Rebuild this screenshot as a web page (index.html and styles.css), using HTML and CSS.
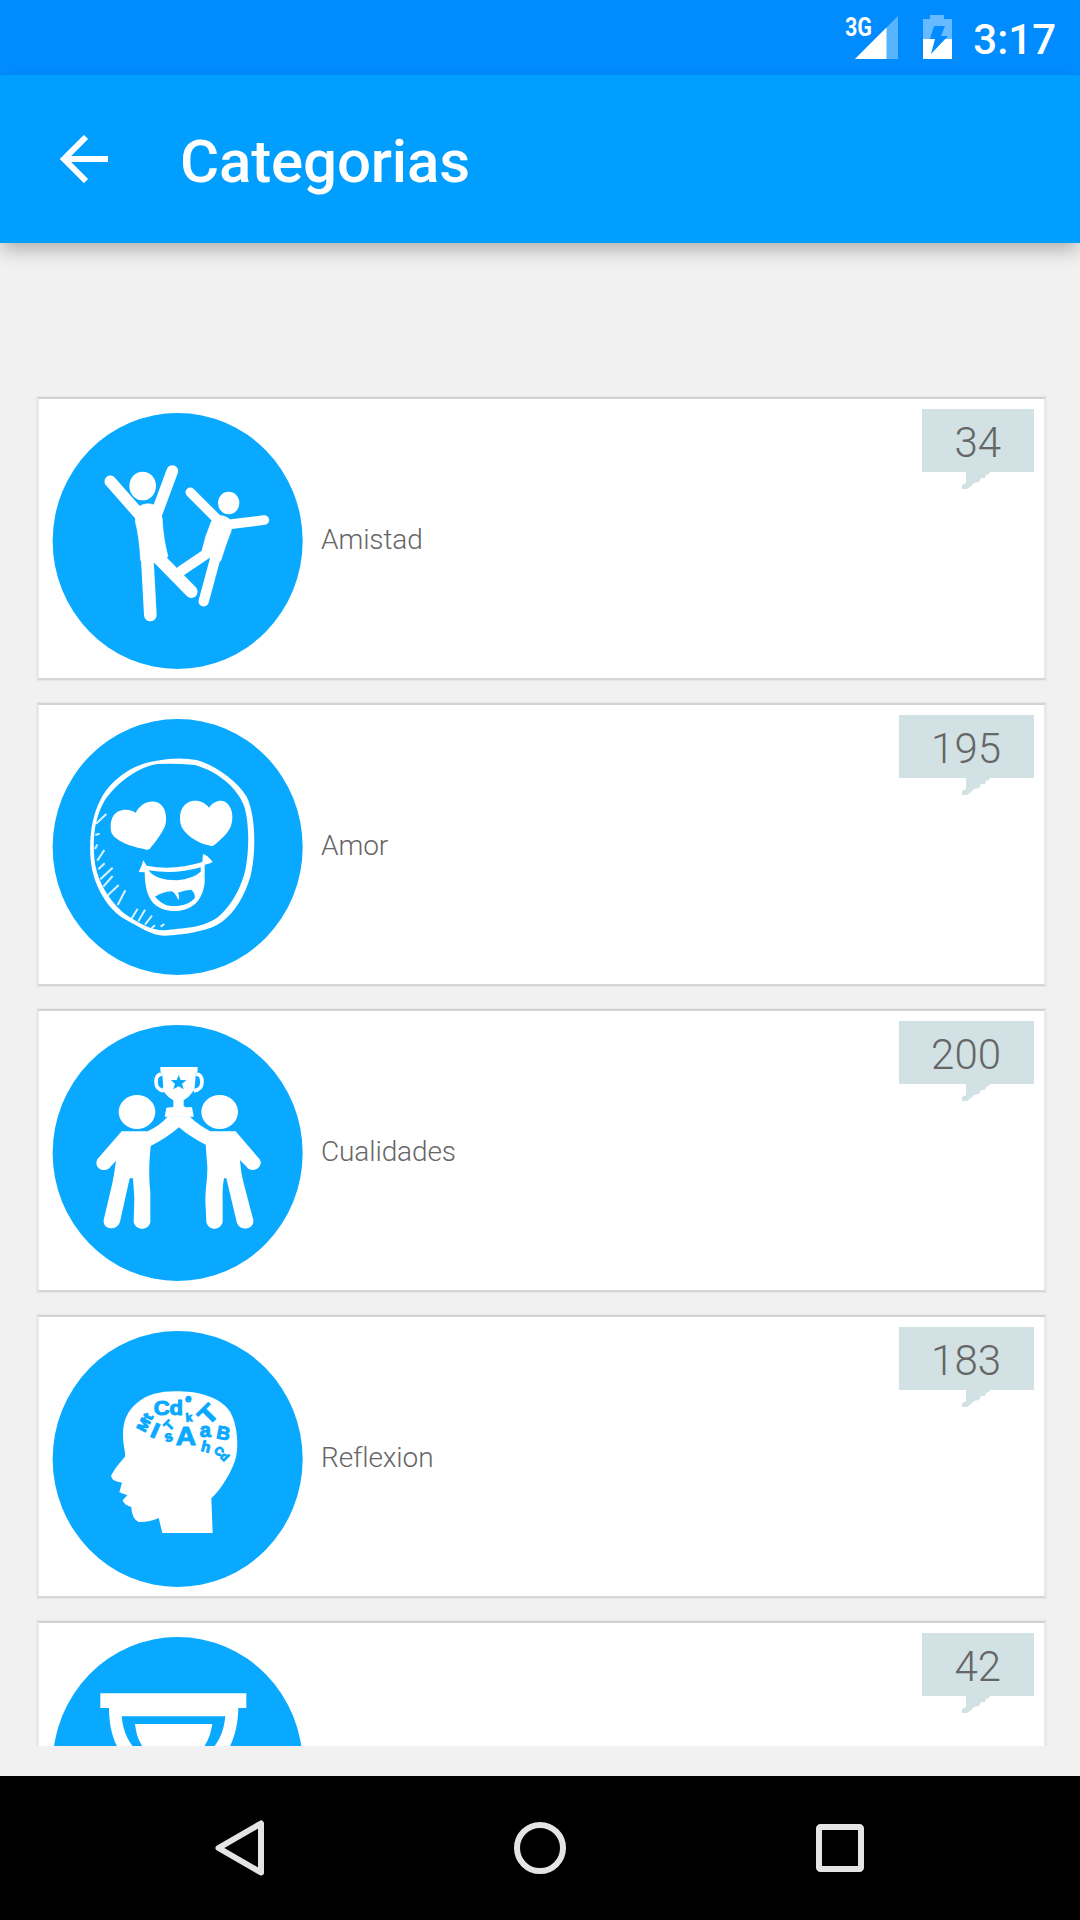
FILE: index.html
```html
<!DOCTYPE html>
<html lang="es">
<head>
    <meta charset="UTF-8">
    <meta name="viewport" content="width=device-width, initial-scale=1.0">
    <title>Categorias</title>
    <link rel="stylesheet" href="styles.css">
</head>
<body>
    <div class="status-bar">
        <svg class="signal" width="54" height="48" viewBox="0 0 54 48">
            <path d="M52 3V46H9z" fill="#fff" fill-opacity=".35"/>
            <path d="M40.500 14.500V46H9z" fill="#fff"/>
            <rect x="0" y="0" width="25" height="24" fill="#008cff"/>
            <text x="-1" y="22.500" textLength="27" lengthAdjust="spacingAndGlyphs">3G</text>
        </svg>
        <svg class="battery" width="29" height="44" viewBox="0 0 29 44">
            <path d="M7 0h14v4h8v20H0V4h7z" fill="#fff" fill-opacity=".4"/>
            <path d="M0 24h29v20H0z" fill="#fff"/>
            <path d="M11 11h11l-4 10h7L8 39l4-15H7z" fill="#008cff"/>
        </svg>
        <span class="clock">3:17</span>
    </div>

    <header class="app-bar">
        <svg class="back" width="48" height="48" viewBox="0 0 48 48">
            <path d="M48 24H6M26 2L4 24l22 22" fill="none" stroke="#fff" stroke-width="6"/>
        </svg>
        <h1>Categorias</h1>
    </header>

    <main class="list">
        <div class="card">
            <svg class="icon" viewBox="66 66 756 774">
                <ellipse class="disc" cx="443" cy="453" rx="375" ry="384"/>
                <g fill="#fff" stroke="#fff" stroke-linecap="round" stroke-linejoin="round">
                    <ellipse cx="338" cy="288" rx="40" ry="43" stroke="none"/>
                    <ellipse cx="596" cy="339" rx="32" ry="34" stroke="none"/>
                    <path d="M241 274L336 382M427 243L380 370" fill="none" stroke-width="35"/>
                    <path d="M351 490L361 675M381 500L484 605" fill="none" stroke-width="38"/>
                    <path d="M326 350Q351 334 377 347L396 382Q400 450 414 500L372 517L332 512Q328 440 316 394L318 370z" stroke-width="2"/>
                    <path d="M481 307L564 390M592 404L703 390" fill="none" stroke-width="29"/>
                    <path d="M532 490L453 543M560 490L521 634" fill="none" stroke-width="31"/>
                    <path d="M554 378Q580 373 598 387L604 421Q585 470 572 513L544 502L516 482Q525 440 542 400z" stroke-width="2"/>
                </g>
            </svg>
            <span class="name">Amistad</span>
            <span class="count">34</span>
        </div>

        <div class="card">
            <svg class="icon" viewBox="66 54 756 774">
                <ellipse class="disc" cx="443" cy="441" rx="375" ry="384"/>
                <path fill="#fff" fill-rule="evenodd" d="M380 182Q445 170 500 180C560 198 620 242 650 290C680 350 677 470 661 530C643 590 613 637 580 662C537 697 448 704 408 707C370 710 333 684 280 655C226 620 188 548 182 480C176 410 187 344 213 296C245 236 310 192 380 182zM382 192C315 203 250 260 222 305C194 354 188 414 193 475C199 535 227 590 278 637C326 671 367 692 403 691C455 684 525 686 571 645C612 607 637 550 646 510C658 450 658 370 643 320C620 257 557 213 495 195Q440 190 382 192z"/>
                <g fill="#fff">
                    <path d="M317 338C333 309 361 298 385 308C407 320 411 349 407 371C402 394 373 429 359 447Q353 451 341 447C292 438 251 418 244 397C239 374 243 345 265 334C282 326 302 328 317 338z"/>
                    <path d="M537 323C556 297 583 297 596 315C610 333 609 360 603 377C594 401 569 421 553 435Q547 440 536 436C500 430 463 401 454 379C445 350 451 321 473 308C493 297 522 302 537 323z"/>
                    <path d="M340 481L350 497Q430 513 517 486L519 462Q531 464 548 486Q537 493 524 494L524 548C517 604 486 633 430 633C376 631 345 602 344 517L326 516Q335 500 340 481z"/>
                </g>
                <g class="cut">
                    <path d="M356 511Q435 525 512 502L512 515Q490 536 441 541Q376 541 356 511z"/>
                    <path d="M375 590Q396 576 425 574Q435 578 445 600Q450 591 444 578Q463 570 484 569Q495 578 495 593C480 611 455 619 430 618C407 618 390 607 375 590z"/>
                </g>
                <path d="M198 371L229 342M196 405L209 401M195 447L202 433M202 482L223 450M205 508L224 490M211 538L248 503M220 560L248 528M232 587L266 555M263 615L286 571M304 657L323 626M325 664L345 629M345 674L366 647M365 684L375 676M392 680L403 672" fill="none" stroke="#fff" stroke-width="6" stroke-opacity=".85"/>
            </svg>
            <span class="name">Amor</span>
            <span class="count">195</span>
        </div>

        <div class="card">
            <svg class="icon" viewBox="66 57 756 774">
                <ellipse class="disc" cx="443" cy="444" rx="375" ry="384"/>
                <g fill="#fff">
                    <path d="M391 186H503V199L497 205V236Q492 267 461 286V302L466 307H486L491 335H404L409 308L430 306V286Q397 268 397 236V205L391 199z"/>
                    <path d="M397 207Q378 207 378 231Q378 255 403 257M497 207Q516 207 516 231Q516 255 491 257" fill="none" stroke="#fff" stroke-width="11"/>
                    <ellipse cx="321" cy="321" rx="55" ry="51"/>
                    <ellipse cx="569" cy="321" rx="55" ry="51"/>
                    <path d="M275 379H353Q391 361 414 334H478Q506 361 541 379H617L689 463C701 481 678 504 655 491L630 465Q632 503 641 535L670 645C673 674 631 680 621 655L589 520H582Q576 550 578 585V650C572 678 534 678 529 650L526 585C526 550 533 520 532 485L527 419Q480 396 447 367Q410 399 362 423C356 485 357 525 361 560V650C357 678 316 678 311 650L313 580L309 520H299L270 650C262 678 218 676 221 645L247 535Q254 500 258 467L236 491C211 504 192 482 202 463z"/>
                </g>
                <path class="cut" d="M446 210L452 225L470 226L456 236L461 253L446 244L430 253L435 236L422 226L440 225zM397 216Q386 218 386 231Q386 244 400 247zM497 216Q508 218 508 231Q508 244 494 247z"/>
            </svg>
            <span class="name">Cualidades</span>
            <span class="count">200</span>
        </div>

        <div class="card">
            <svg class="icon" viewBox="66 75 756 774">
                <ellipse class="disc" cx="443" cy="462" rx="375" ry="384"/>
                <path fill="#fff" d="M285 442C271 375 281 326 320 295C353 264 402 257 449 259C510 260 574 278 602 323C622 360 628 425 615 467C602 504 577 547 544 580L548 684H397L386 639Q359 652 326 651Q305 641 304 606Q281 600 278 586L292 571L268 562L276 533Q247 530 243 513Q251 493 285 455z"/>
                <g class="letters">
                    <text x="371" y="329" font-size="58" textLength="88" lengthAdjust="spacingAndGlyphs">Cd</text>
                    <text transform="translate(464 289) rotate(12)" font-size="32">e</text>
                    <text transform="translate(468 350) rotate(-5)" font-size="35">k</text>
                    <text transform="translate(552 346) rotate(-45)" x="-26" font-size="74" textLength="52" lengthAdjust="spacingAndGlyphs">T</text>
                    <text transform="translate(344 384) rotate(-62)" font-size="43" textLength="56" lengthAdjust="spacingAndGlyphs">Mt</text>
                    <text transform="translate(357 393) rotate(24)" font-size="65" textLength="21" lengthAdjust="spacingAndGlyphs">I</text>
                    <text transform="translate(427 370) rotate(-45)" x="-13" font-size="40">T</text>
                    <text transform="translate(407 412) rotate(-15)" font-size="44">s</text>
                    <text x="437" y="420" font-size="80" textLength="61" lengthAdjust="spacingAndGlyphs">A</text>
                    <text x="509" y="395" font-size="60">a</text>
                    <text transform="translate(557 400) rotate(10)" font-size="56">B</text>
                    <text transform="translate(511 437) rotate(14)" font-size="45">h</text>
                    <text transform="translate(550 438) rotate(45)" font-size="35">Cd</text>
                </g>
            </svg>
            <span class="name">Reflexion</span>
            <span class="count">183</span>
        </div>

        <div class="card">
            <svg class="icon" viewBox="66 108 756 774">
                <ellipse class="disc" cx="443" cy="495" rx="375" ry="384"/>
                <path fill="#fff" d="M211 280H649V324H625C624 380 610 430 582 470L460 560V650H550V700H310V650H400V560L280 470C250 430 237 380 237 324H211z"/>
                <path class="cut" d="M275 349H586C579 415 554 470 430 520C305 470 281 410 275 349z"/>
                <path fill="#fff" d="M315 372H547C538 425 520 470 430 500C340 470 321 425 315 372z"/>
            </svg>
            <span class="name"></span>
            <span class="count">42</span>
        </div>
    </main>

    <nav class="nav-bar">
        <svg width="60" height="60" viewBox="0 0 60 60">
            <path d="M51 5.500v49L8.500 30z"/>
        </svg>
        <svg width="60" height="60" viewBox="0 0 60 60">
            <circle cx="30" cy="30" r="23"/>
        </svg>
        <svg width="60" height="60" viewBox="0 0 60 60">
            <rect x="9" y="9" width="42" height="42" rx="1.500"/>
        </svg>
    </nav>
</body>
</html>
```

FILE: styles.css
```css
body {
    margin: 0;
    height: 1920px;
    display: flex;
    flex-direction: column;
    overflow: hidden;
    background-color: #f1f1f1;
    font-family: Roboto, sans-serif;
}
svg {
    display: block;
    flex-shrink: 0;
}
.status-bar {
    display: flex;
    justify-content: flex-end;
    height: 75px;
    padding-right: 24px;
    box-sizing: border-box;
    background-color: #008cff;
    color: #fff;
}
.signal {
    margin-top: 13px;
    margin-right: 23px;
}
.signal text {
    fill: #fff;
    font-size: 25px;
    font-weight: bold;
}
.battery {
    margin-top: 15px;
    margin-right: 21px;
}
.clock {
    font-size: 42px;
    font-weight: 500;
    line-height: 80px;
}
.app-bar {
    display: flex;
    height: 168px;
    padding-left: 60px;
    box-sizing: border-box;
    background-color: #009eff;
    color: #fff;
    box-shadow: 0 9px 18px -2px rgba(0, 0, 0, 0.27);
}
.back {
    margin-top: 60px;
    margin-right: 72px;
}
h1 {
    margin: 0;
    font-size: 60px;
    font-weight: 500;
    letter-spacing: -0.15px;
    line-height: 174px;
}
.list {
    height: 1350px;
    margin: 153px 33px 30px 36px;
    padding: 1px 1px 0;
    box-sizing: border-box;
    overflow: hidden;
}
.card {
    display: flex;
    align-items: flex-start;
    height: 283px;
    margin-bottom: 23px;
    padding: 13px 10px 0 13px;
    box-sizing: border-box;
    background-color: #fff;
    border: 2px solid #e8e8e8;
    border-top-color: #d2d2d2;
    border-bottom-color: #d6d6d6;
    box-shadow: 0 0 1px 1px #e8e8e8;
}
.icon {
    width: 252px;
    height: 258px;
}
.disc, .cut, .letters {
    fill: #09a9ff;
}
.letters {
    font-family: "Liberation Sans", sans-serif;
    font-weight: bold;
    stroke: #09a9ff;
    stroke-width: 3px;
}
.name {
    flex: 1;
    padding-left: 17px;
    color: #666;
    font-size: 28px;
    font-weight: 300;
    letter-spacing: -0.1px;
    line-height: 256px;
}
.count {
    position: relative;
    height: 63px;
    margin-top: -3px;
    padding: 0 33px 0 32px;
    background-color: #d2e1e3;
    color: #666;
    font-size: 42px;
    font-weight: 300;
    line-height: 68px;
}
/* little tail of the speech bubble */
.count::after {
    content: "";
    position: absolute;
    top: 63px;
    right: 44px;
    width: 28px;
    height: 17px;
    background-color: #d2e1e3;
    clip-path: polygon(4px 0, 100% 0, 27px 2px, 24px 3px, 23px 6px, 19px 6px, 17px 10px, 12px 11px, 9px 14px, 5px 17px, 0 17px, 0 13px, 4px 11px);
}
.nav-bar {
    display: flex;
    justify-content: space-between;
    align-items: center;
    height: 144px;
    padding: 0 210px;
    background-color: #000;
}
.nav-bar svg {
    fill: none;
    stroke: #e4e4e4;
    stroke-width: 6;
    stroke-linejoin: round;
}
```
